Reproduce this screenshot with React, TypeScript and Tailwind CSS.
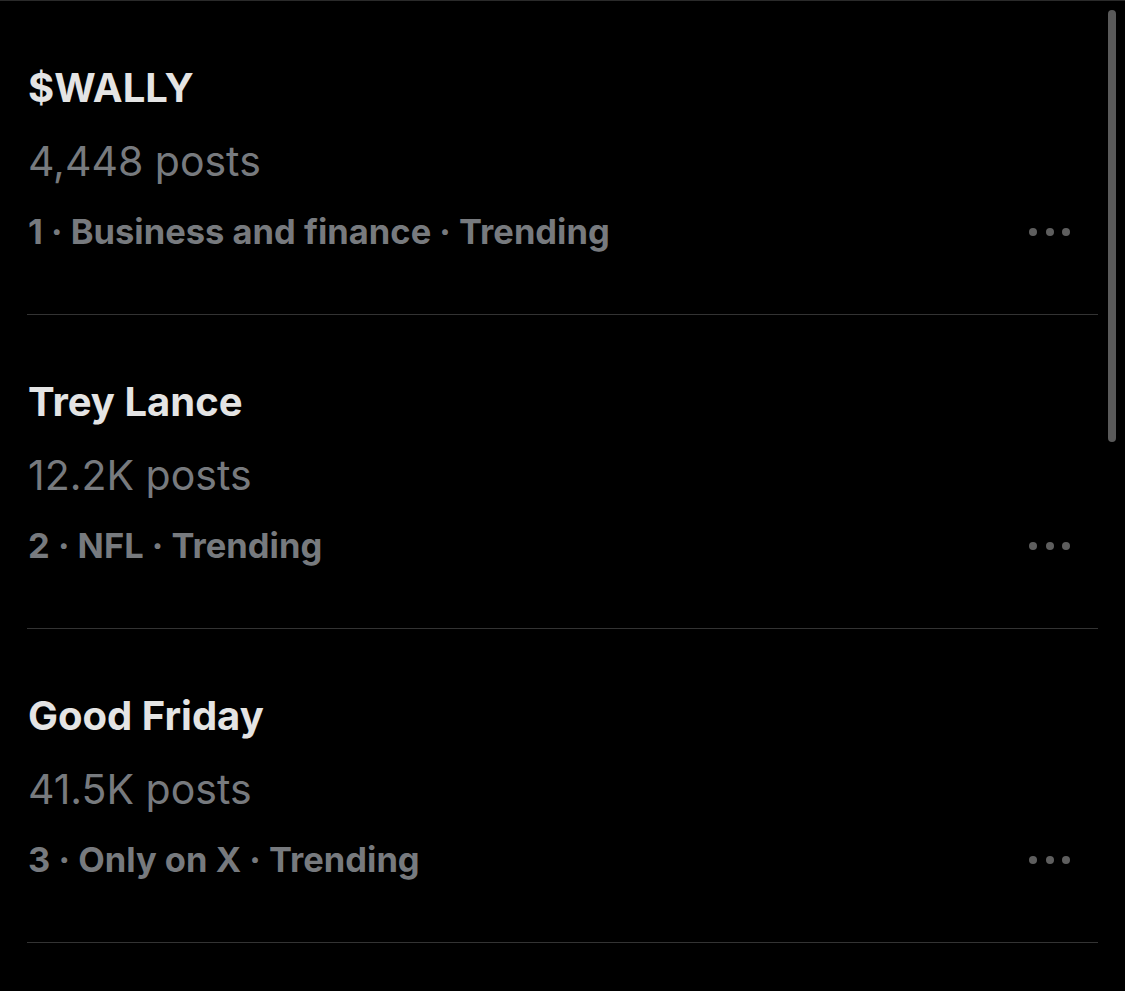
const trends = [
  { title: "$WALLY", posts: "4,448 posts", meta: "1 · Business and finance · Trending" },
  { title: "Trey Lance", posts: "12.2K posts", meta: "2 · NFL · Trending" },
  { title: "Good Friday", posts: "41.5K posts", meta: "3 · Only on X · Trending" },
];

function MoreDots() {
  return (
    <div className="flex items-center gap-[8.5px]">
      <span className="block h-[8px] w-[8px] rounded-full bg-[#5e5e5e]" />
      <span className="block h-[8px] w-[8px] rounded-full bg-[#5e5e5e]" />
      <span className="block h-[8px] w-[8px] rounded-full bg-[#5e5e5e]" />
    </div>
  );
}

export default function App() {
  return (
    <div className="relative h-[991px] w-[1125px] overflow-hidden border-t border-[#2a2a2a] bg-black font-['Inter',sans-serif]">
      <div className="px-[27px]">
        {trends.map((t) => (
          <div key={t.title} className="h-[314px] border-b border-[#333] pl-[1px] pt-[63px]">
            <div className="text-[40px] font-bold leading-[48px] text-[#e4e4e4]">{t.title}</div>
            <div className="mt-[25px] text-[41px] leading-[48px] text-[#777a7e]">{t.posts}</div>
            <div className="mt-[27px] flex items-center justify-between pr-[28px]">
              <div className="text-[34.5px] font-bold leading-[40px] text-[#777a7e]">{t.meta}</div>
              <MoreDots />
            </div>
          </div>
        ))}
      </div>
      <div className="absolute right-[9px] top-[9px] h-[432px] w-[8px] rounded-full bg-[#5a5a5a]" />
    </div>
  );
}
